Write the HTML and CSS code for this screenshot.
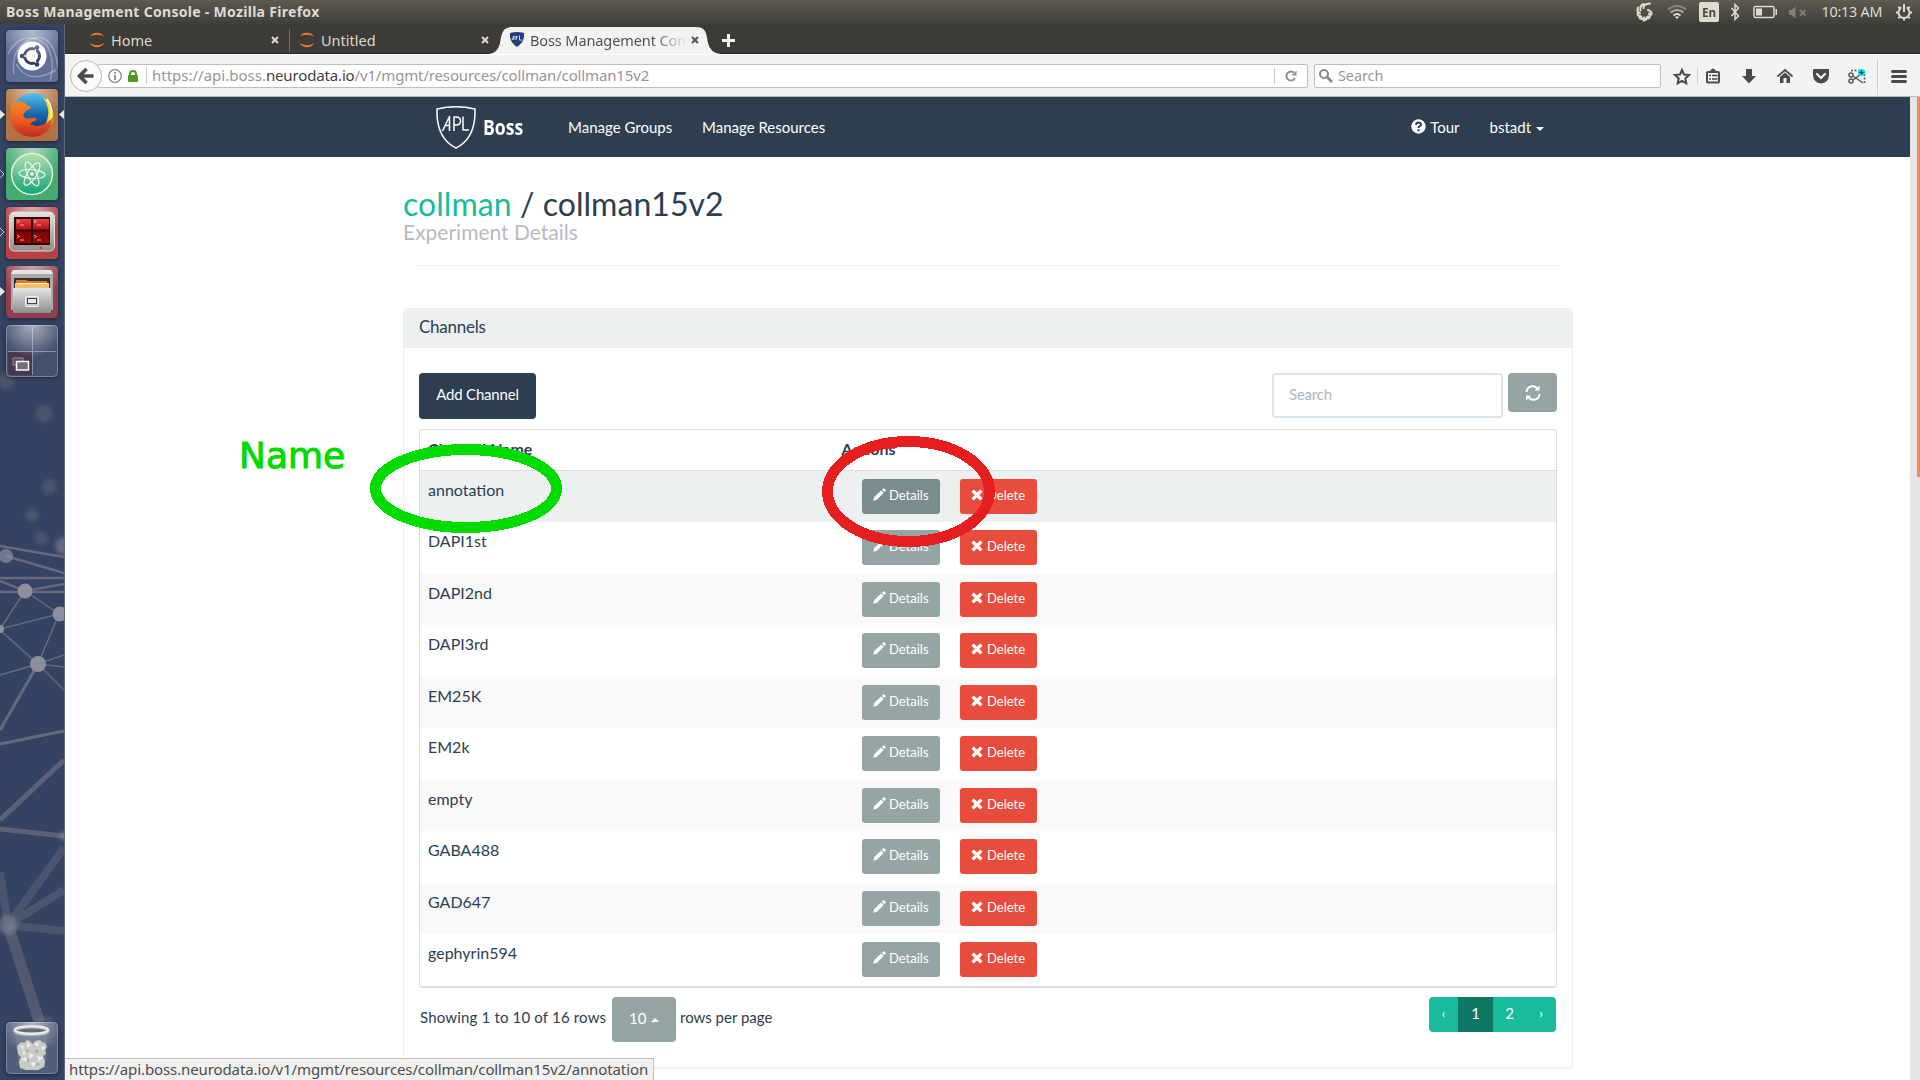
FILE: index.html
```html
<!DOCTYPE html>
<html lang="en">
<head>
<meta charset="utf-8">
<title>Boss Management Console</title>
<link rel="stylesheet" href="styles.css">
</head>
<body>
<svg width="0" height="0" class="defs">
  <defs>
    <symbol id="pencil" viewBox="0 0 14 14"><path fill="currentColor" d="M0.3 13.7 1.4 9.8 8.8 2.6 11.5 5.3 4.2 12.6zM9.6 1.8 11 .5Q11.6 0 12.2.5L13.6 1.9Q14 2.5 13.5 3.1L12.2 4.4z"/></symbol>
    <symbol id="cross" viewBox="0 0 12 12"><path fill="currentColor" d="M.5 2.7 2.7.5 6 3.6 9.3.5 11.5 2.7 8.4 6 11.5 9.3 9.3 11.5 6 8.4 2.7 11.5.5 9.3 3.6 6z"/></symbol>
    <symbol id="jupyter" viewBox="0 0 16 16"><path fill="#f37726" d="M.6 5.2C2 2.2 4.7.8 8 .8s6 1.4 7.4 4.4C13.600 3.500 11 2.800 8 2.800S2.400 3.500.6 5.200zM.6 10.800C2 13.800 4.700 15.200 8 15.200s6-1.400 7.400-4.400C13.600 12.500 11 13.200 8 13.200S2.400 12.500.6 10.800z"/></symbol>
    <radialGradient id="glow" cx=".5" cy="0" r=".62"><stop offset="0" stop-color="#fff" stop-opacity=".55"/><stop offset="1" stop-color="#fff" stop-opacity="0"/></radialGradient>
    <linearGradient id="steel" x1="0" y1="0" x2="0" y2="1"><stop offset="0" stop-color="#e4e4e2"/><stop offset="1" stop-color="#8d8d89"/></linearGradient>
    <linearGradient id="blue" x1="0" y1="0" x2="0" y2="1"><stop offset="0" stop-color="#51c4ef"/><stop offset=".5" stop-color="#1767ac"/><stop offset="1" stop-color="#182a66"/></linearGradient>
    <linearGradient id="fox" x1="0" y1="0" x2="0" y2="1"><stop offset="0" stop-color="#f4942c"/><stop offset=".6" stop-color="#ea5b20"/><stop offset="1" stop-color="#bd2a1c"/></linearGradient>
    <linearGradient id="atom" x1="0" y1="0" x2="0" y2="1"><stop offset="0" stop-color="#b5e0ae"/><stop offset="1" stop-color="#12a575"/></linearGradient>
    <linearGradient id="red" x1="0" y1="0" x2="0" y2="1"><stop offset="0" stop-color="#e04444"/><stop offset=".45" stop-color="#b80d10"/><stop offset=".5" stop-color="#7b0204"/><stop offset="1" stop-color="#960608"/></linearGradient>
  </defs>
</svg>

<header class="panel">
  <span class="panel-title">Boss Management Console - Mozilla Firefox</span>
  <svg class="tray" width="292" height="24" viewBox="1628 0 292 24">
    <g fill="none" stroke="#dfdbd2" stroke-width="2" stroke-linecap="round">
      <path d="M1643.500 8Q1643 4 1650 3.500M1640.500 10.500Q1639.500 6 1643.500 4M1640 13.500Q1636.500 11.500 1638 7.500M1641.500 16.500Q1637.500 16.500 1637.500 13M1644.500 17.500Q1641.500 20 1639.500 18M1647.500 16.500Q1647 20 1643.500 20.500M1649 13.500Q1651 16.500 1648.500 18.500M1648 10Q1652 11.500 1651.500 14.500"/>
    </g>
    <g fill="none" stroke-width="2"><path stroke="#87857e" d="M1668 9.500q9-7 18 0"/><path stroke="#b1aea6" d="M1670.500 12.500q6.500-5 13 0"/><path stroke="#dfdbd2" d="M1673.500 15.500q3.500-3 7 0"/></g><path fill="#dfdbd2" d="m1675 17 2 2 2-2q-2-1.500-4 0"/>
    <rect x="1699" y="2" width="20" height="20" rx="2" fill="#dfdbd2"/><text x="1702" y="17" class="lang" textLength="14" lengthAdjust="spacingAndGlyphs">En</text>
    <path d="m1731.500 8 7 8-3.500 3.500V4.500l3.500 3.500-7 8" fill="none" stroke="#dfdbd2" stroke-width="1.500"/>
    <rect x="1754" y="6.500" width="20" height="11" rx="1.500" fill="none" stroke="#dfdbd2" stroke-width="1.500"/><path fill="#dfdbd2" d="M1756 8.500h6v7h-6zM1775.500 9h1.500v6h-1.500z"/>
    <path fill="#83807a" d="M1789 10h2.500l4-3.500v12l-4-3.500h-2.500z"/><path stroke="#83807a" stroke-width="1.800" d="m1800 10 5.500 5.500m0-5.500-5.500 5.500"/>
    <text x="1821.500" y="17" class="clock" textLength="61">10:13 AM</text>
    <g fill="none" stroke="#dfdbd2"><circle cx="1904" cy="12.500" r="5.500" stroke-width="2"/><path stroke-width="2" d="M1904 18v2.500M1896 12.500h2.500M1909.500 12.500h2.500M1898.300 6.800l1.500 1.500M1909.700 6.800l-1.500 1.500M1898.300 18.200l1.500-1.500M1909.700 18.200l-1.500-1.500"/><path stroke="#504e48" stroke-width="5" d="M1904 4.500v6"/><path stroke-width="2" d="M1904 4v8"/></g>
  </svg>
</header>

<div class="desktop">
  <aside class="launcher">
    <svg class="wallpaper" width="64" height="1056" viewBox="0 24 64 1056">
      <g class="haze" fill="#8b8794" opacity=".25"><circle cx="44" cy="414" r="9"/><circle cx="49" cy="487" r="8"/><circle cx="32" cy="515" r="7"/><circle cx="41" cy="538" r="7"/><circle cx="6" cy="381" r="9"/></g>
      <g stroke="#a59aa0" fill="none" opacity=".45">
        <g stroke-width="2.500"><path d="M6 556 64 573M0 578H64M0 592H64M0 581 25 591 64 584M0 546 64 557"/></g>
        <g stroke-width="1.500"><path d="M25 591 59 614 0 629 25 591M59 614 38 664 0 630M38 664 64 655M38 664 64 667M38 664 64 690M38 664 0 675"/></g>
        <g stroke-width="3"><path d="M38 664 0 730M0 744 64 731"/></g>
        <g stroke-width="5" opacity=".8"><path d="M0 820 64 760M0 829 64 836"/></g>
        <g stroke-width="8" opacity=".45"><path d="M8 925 64 848M8 925 64 890M8 925 64 931M8 925 0 872"/></g>
        <path stroke-width="11" opacity=".6" d="m8 925 34 105"/>
      </g>
      <g fill="#8d8f9f"><circle cx="6" cy="556" r="7" opacity=".7"/><circle cx="25" cy="591" r="7.500"/><circle cx="60" cy="614" r="7.500"/><circle cx="0" cy="629" r="4"/><circle cx="38" cy="664" r="8"/><g class="haze"><circle cx="8" cy="925" r="10" opacity=".5"/><circle cx="64" cy="546" r="9" opacity=".5"/><circle cx="64" cy="836" r="5" opacity=".5"/><circle cx="44" cy="1028" r="12" opacity=".3"/></g></g>
    </svg>
    <div class="dock">
      <svg class="app" viewBox="0 0 52 52"><rect width="52" height="52" rx="4" fill="#5f6f98"/><g fill="none" stroke="#fff" stroke-opacity=".3" stroke-width="1.500"><path d="M2 24Q16-2 40 14 50 30 44 51"/><path d="M8 44Q4 16 28 8 48 4 52 38"/><path d="M50 40Q22 56 10 34"/></g><circle cx="26" cy="26" r="14.500" fill="#fff"/><circle cx="26" cy="26" r="7.500" fill="none" stroke="#343f60" stroke-width="3"/><path d="M26 26 12 26M26 26 33 14M26 26 33 38" stroke="#fff" stroke-width="1.500"/><circle cx="26" cy="26" r="5.500" fill="#fff"/><g fill="#343f60"><circle cx="16" cy="26" r="2.300"/><circle cx="31" cy="17.500" r="2.300"/><circle cx="31" cy="34.500" r="2.300"/></g><rect width="52" height="52" rx="4" fill="url(#glow)"/></svg>
      <svg class="app" viewBox="0 0 52 52"><rect width="52" height="52" rx="4" fill="#b27344"/><rect width="52" height="52" rx="4" fill="url(#glow)"/><circle cx="27" cy="25" r="21" fill="url(#blue)"/><path d="M36 7Q50 16 47 32 44 42 34 44L40 34Q46 20 36 7z" fill="#fbd22e"/><path d="M41 10Q48 20 44 34" fill="none" stroke="#fff3a0" stroke-width="2"/><path fill="url(#fox)" d="M9 8Q7 11 9 14 13 11 18 13L22 17Q25 16 25 19L20 22 17 26Q19 31 25 29 30 28 31 31 27 32 24 35 33 40 43 32L47 28Q45 47 26 48 5 46 4 27 4 18 8 13z"/></svg>
      <svg class="app" viewBox="0 0 52 52"><rect width="52" height="52" rx="4" fill="#45ac70"/><rect width="52" height="52" rx="4" fill="url(#glow)"/><circle cx="26" cy="26" r="20.500" fill="url(#atom)" stroke="#e2f0e4" stroke-width="1.500"/><g fill="none" stroke="#eaf7ec" stroke-width="1.200"><ellipse cx="26" cy="26" rx="13" ry="4.500" transform="rotate(5 26 26)"/><ellipse cx="26" cy="26" rx="13" ry="4.500" transform="rotate(65 26 26)"/><ellipse cx="26" cy="26" rx="13" ry="4.500" transform="rotate(122 26 26)"/></g><circle cx="26" cy="26" r="1.800" fill="#fff"/></svg>
      <svg class="app" viewBox="0 0 52 52"><rect width="52" height="52" rx="4" fill="#b74245"/><rect width="52" height="52" rx="4" fill="url(#glow)"/><rect x="3.500" y="5" width="45" height="39" rx="5" fill="url(#steel)" stroke="#deded9"/><rect x="8" y="10" width="36" height="28" fill="#350306"/><path fill="url(#red)" d="M10 12H43V36H10z"/><path stroke="#35090b" stroke-width="2" d="M26 10v28M8 23.500h36"/><g stroke="#ffc4c4" fill="none" opacity=".8"><path d="m11 13 2.500 1.500L11 16M14 18h4M28 13l2.500 1.500L28 16M31 18h4M11 28l2.500 1.500L11 31M14 33h4M28 28l2.500 1.500L28 31M31 33h4"/></g><circle cx="35" cy="41" r="1.300" fill="#ee2d2d"/></svg>
      <svg class="app" viewBox="0 0 52 52"><rect width="52" height="52" rx="4" fill="#923e4c"/><rect width="52" height="52" rx="4" fill="url(#glow)"/><path fill="#aaa" d="M5 8 7 4H45L47 8V44H5z"/><path fill="#e6e6e4" d="M5 8 7 4H45L47 8z"/><path fill="#333" d="M8 12h36v12H8z"/><path fill="#e07820" d="M10 14h10l2 1h19v8H10z"/><path fill="#f8bd68" d="M9 17h34v5H9z"/><path stroke="#fff2d8" d="M11 17.500h31"/><path fill="url(#steel)" d="M7 22H45V47H7z"/><rect x="19.500" y="30.500" width="13" height="10" rx="1.500" fill="#ccc" stroke="#eee"/><rect x="21.500" y="32.500" width="9" height="5" fill="#eee" stroke="#444"/></svg>
      <svg class="app" viewBox="0 0 52 52"><rect x=".5" y=".5" width="51" height="51" rx="4" fill="#43516f" stroke="#7a859c"/><rect x="2" y="27" width="24" height="23" fill="#46384a"/><path stroke="#8791a5" d="M26.500 2v48M2 26.500h48"/><rect width="52" height="52" rx="4" fill="url(#glow)"/><rect x="7" y="33" width="10" height="7" fill="#54485a" stroke="#938b98"/><rect x="10.500" y="36.500" width="12" height="8.500" fill="#76697b" stroke="#fff" stroke-width="1.500"/></svg>
      <svg class="app trash" viewBox="0 0 52 52"><rect x=".5" y=".5" width="51" height="51" rx="4" fill="#505d7d" stroke="#7b869f"/><rect width="52" height="52" rx="4" fill="url(#glow)"/><path fill="#7a8496" opacity=".6" d="M9 12H42L39 45Q26 49 13 45z"/><path fill="#c9cbc7" d="m11 24 4-4 3 1 3-3 3 1 3 3 2-3 5-1 2 2 3 1 2 4-2 3 1 4-3 2 2 5-1 6-6 3H20l-6-2-1-7 2-4-3-3z"/><path fill="#eff0ec" d="m14 23 4 1-1 4zM21 20l4 3-4 3zM28 22l5-2-1 5zM36 24l3 1-3 4zM15 37l5-2 1 5zM23 31l5 2-4 4zM31 34l6 1-4 5zM24 41l6-1-2 5zM17 29l3 2-3 2z"/><path fill="#a9aca7" d="m20 27 4 2-4 2zM29 27l4 2-3 3zM21 36l3 2-3 3zM30 41l4 1-4 2z"/><ellipse cx="25.500" cy="8.500" rx="16.500" ry="3.800" fill="#626c7c" stroke="#b9bbb6" stroke-width="3.500"/><ellipse cx="25.500" cy="8" rx="16.500" ry="3.800" fill="none" stroke="#eeefeb" stroke-width="2"/></svg>
    </div>
    <svg class="pips" width="64" height="300" viewBox="0 24 64 300"><path fill="#e8e6e3" d="m0 110 5 4.500-5 4.500zM64 110l-5 4.500 5 4.500zM0 287l5 4.500-5 4.500z"/><path fill="none" stroke="#c4cad4" d="m0 170 4 4-4 4M0 228l4 4-4 4"/></svg>
  </aside>

  <main class="window">
    <nav class="tabs">
      <div class="tab home"><svg width="16" height="16"><use href="#jupyter"/></svg><span>Home</span><svg class="close" width="8" height="8"><use href="#cross"/></svg></div>
      <div class="tab untitled"><svg width="16" height="16"><use href="#jupyter"/></svg><span>Untitled</span><svg class="close" width="8" height="8"><use href="#cross"/></svg></div>
      <div class="tab active">
        <svg class="tab-shape" width="236" height="28" viewBox="0 0 236 28"><path fill="#f4f3f1" d="M0 28Q9 27 11 17C13 4 15 1 24 1H205C216 1 217 4 219 17Q221 27 232 28z"/></svg>
        <svg class="favicon" width="14" height="15" viewBox="0 0 14 15"><path fill="#253e7a" d="M0 1Q7-1 14 1 15 10 7 15-1 10 0 1z"/><path fill="none" stroke="#fff" stroke-width=".8" d="m2 8 2-4v4M6 8V4q3 1 0 2.500M9.500 3.500V8h2.500"/></svg>
        <span class="active-name">Boss Management Con</span><svg class="close" width="8" height="8"><use href="#cross"/></svg>
      </div>
      <svg class="plus" width="13" height="13"><path stroke="#f4f3f1" stroke-width="3" d="M6.500 0v13M0 6.500h13"/></svg>
    </nav>

    <div class="toolbar">
      <svg class="back" width="32" height="32"><circle cx="16" cy="16" r="15.500" fill="#fafaf9" stroke="#b7b5b1"/><path fill="none" stroke="#4a4a4a" stroke-width="3.600" d="M23.500 16H11M16.500 9 9.500 16l7 7"/></svg>
      <div class="address">
        <svg width="14" height="14"><circle cx="7" cy="7" r="6.300" fill="none" stroke="#888" stroke-width="1.300"/><path stroke="#777" stroke-width="1.600" d="M7 3v1.700M7 6v5"/></svg>
        <svg class="lock" width="10" height="12"><path fill="#4e9a22" d="M0 6q0-1 1-1V4q0-4 4-4t4 4v1q1 0 1 1v5q0 1-1 1H1q-1 0-1-1z"/><path fill="#fff" d="M3 5V4q0-2 2-2t2 2v1z"/></svg>
        <span class="url"><span class="scheme">https://api.boss.</span><span class="domain">neurodata.io</span><span class="path">/v1/mgmt/resources/collman/collman15v2</span></span>
        <span class="reload"><svg width="12" height="12"><path fill="none" stroke="#8795a1" stroke-width="2" d="M9 2.800A4.500 4.500 0 1 0 10 8"/><path fill="#8795a1" d="M6.500 5.500H11.500V.5z"/></svg></span>
      </div>
      <div class="search"><svg width="14" height="14"><circle cx="5" cy="5" r="4" fill="none" stroke="#888" stroke-width="2"/><path stroke="#888" stroke-width="2.600" d="m8 8 5 5"/></svg><span>Search</span></div>
      <svg class="tools" width="259" height="42" viewBox="1661 54 259 42">
        <path fill="none" stroke="#4a4a4a" stroke-width="2" d="m1682 69 2 4.500 5 .6-3.700 3.300 1 4.900-4.300-2.500-4.300 2.500 1-4.900-3.700-3.300 5-.6z"/>
        <path stroke="#d2d0cd" d="M1697.500 67v16M1877.500 58v36"/>
        <rect x="1707" y="71" width="12" height="10.500" rx="1" fill="none" stroke="#4a4a4a" stroke-width="2"/><path stroke="#4a4a4a" stroke-width="1.500" d="M1709 74.500h2M1712 74.500h5.500M1709 78h2M1712 78h5.500"/><path fill="#4a4a4a" d="M1709 71q0-1.500 2-1.500 0-2 2-2t2 2q2 0 2 1.500z"/>
        <path fill="#4a4a4a" d="M1746 68h6v7h4l-7 7.500-7-7.500h4z"/>
        <path fill="none" stroke="#4a4a4a" stroke-width="1.800" d="m1777.500 75.500 7.500-6.500 7.500 6.500"/><path fill="#4a4a4a" d="m1780 76 5-4.500 5 4.500v6h-3.500v-5h-3v5h-3.500z"/>
        <path fill="#4a4a4a" d="M1813 69q0-1 1-1h14q1 0 1 1v5q-.5 8-8 8.500-7.500-.5-8-8.500z"/><path fill="none" stroke="#f4f3f1" stroke-width="2.200" stroke-linecap="round" d="m1817 73 4 4 4-4"/>
        <g fill="none" stroke="#555" stroke-width="1.500"><path stroke-dasharray="2 1.500" d="M1851 69.500h12M1864.500 73v9"/><circle cx="1851" cy="74" r="2"/><circle cx="1851" cy="80" r="2"/><path d="m1853 79 8-6M1853 75l10 7"/></g><circle cx="1861.500" cy="71.500" r="3.800" fill="#14e6f2"/><path stroke="#234" stroke-width="1.300" d="M1859.500 71.500h4M1861.500 69.500v4"/>
        <path stroke="#4a4a4a" stroke-width="3" stroke-linecap="round" d="M1892.500 70.500h13M1892.500 75.500h13M1892.500 80.500h13"/>
      </svg>
    </div>

    <div class="viewport">
      <div class="page">
        <div class="navbar">
          <svg class="shield" width="40" height="43" viewBox="0 0 40 43"><g fill="none" stroke="#fff" stroke-width="1.500" stroke-linejoin="round"><path d="M1 3Q20-1.500 39 3 40 32 20 42 0 32 1 3z"/><path d="M6.500 25 13.500 10.500V25M9 19.500h4.500M18 25V11h2q4.500 0 4.500 4t-4.500 4h-2M27 10.500V24h6"/></g></svg>
          <span class="brand">Boss</span>
          <a class="groups">Manage Groups</a><a>Manage Resources</a>
          <a class="tour"><svg width="15" height="15"><circle cx="7.500" cy="7.500" r="7.200" fill="#fff"/><path fill="none" stroke="#2c3e50" stroke-width="2" d="M5 5.800q.2-2.300 2.500-2.300T10 5.500q0 1.200-1.500 1.900-1 .5-1 1.600M7.500 10.300v2"/></svg>Tour</a>
          <a>bstadt<i class="caret"></i></a>
        </div>
        <div class="container">
          <h1><span class="collection">collman</span> / collman15v2</h1>
          <p class="sub">Experiment Details</p>
          <hr>
          <section class="card">
            <h2>Channels</h2>
            <div class="card-body">
              <div class="actions">
                <div class="add">Add Channel</div>
                <div class="filter">Search</div>
                <div class="refresh"><svg width="16" height="16"><path fill="none" stroke="#fff" stroke-width="2" d="M1.500 7A6 6 0 0 1 12.500 4M14.500 9A6 6 0 0 1 3.500 12"/><path fill="#fff" d="M9.500 5.500h5V.5zM1 15.500v-5h5z"/></svg></div>
              </div>
              <div class="table">
                <div class="thead"><span>Channel Name</span><span class="ah">Actions</span></div>
                <div class="row hover"><span>annotation</span><div class="btn details"><svg width="13" height="13"><use href="#pencil"/></svg>Details</div><div class="btn delete"><svg width="12" height="12"><use href="#cross"/></svg>Delete</div></div>
                <div class="row"><span>DAPI1st</span><div class="btn details"><svg width="13" height="13"><use href="#pencil"/></svg>Details</div><div class="btn delete"><svg width="12" height="12"><use href="#cross"/></svg>Delete</div></div>
                <div class="row"><span>DAPI2nd</span><div class="btn details"><svg width="13" height="13"><use href="#pencil"/></svg>Details</div><div class="btn delete"><svg width="12" height="12"><use href="#cross"/></svg>Delete</div></div>
                <div class="row"><span>DAPI3rd</span><div class="btn details"><svg width="13" height="13"><use href="#pencil"/></svg>Details</div><div class="btn delete"><svg width="12" height="12"><use href="#cross"/></svg>Delete</div></div>
                <div class="row"><span>EM25K</span><div class="btn details"><svg width="13" height="13"><use href="#pencil"/></svg>Details</div><div class="btn delete"><svg width="12" height="12"><use href="#cross"/></svg>Delete</div></div>
                <div class="row"><span>EM2k</span><div class="btn details"><svg width="13" height="13"><use href="#pencil"/></svg>Details</div><div class="btn delete"><svg width="12" height="12"><use href="#cross"/></svg>Delete</div></div>
                <div class="row"><span>empty</span><div class="btn details"><svg width="13" height="13"><use href="#pencil"/></svg>Details</div><div class="btn delete"><svg width="12" height="12"><use href="#cross"/></svg>Delete</div></div>
                <div class="row"><span>GABA488</span><div class="btn details"><svg width="13" height="13"><use href="#pencil"/></svg>Details</div><div class="btn delete"><svg width="12" height="12"><use href="#cross"/></svg>Delete</div></div>
                <div class="row"><span>GAD647</span><div class="btn details"><svg width="13" height="13"><use href="#pencil"/></svg>Details</div><div class="btn delete"><svg width="12" height="12"><use href="#cross"/></svg>Delete</div></div>
                <div class="row"><span>gephyrin594</span><div class="btn details"><svg width="13" height="13"><use href="#pencil"/></svg>Details</div><div class="btn delete"><svg width="12" height="12"><use href="#cross"/></svg>Delete</div></div>
              </div>
              <div class="footer">
                <span class="showing">Showing 1 to 10 of 16 rows</span>
                <div class="size">10<i class="caret up"></i></div>
                <span>rows per page</span>
                <div class="pager"><span class="arrow">‹</span><span class="current">1</span><span class="two">2</span><span class="arrow next">›</span></div>
              </div>
            </div>
          </section>
        </div>
      </div>
      <div class="scroll"><div class="thumb"></div></div>
    </div>
  </main>
</div>

<div class="status">https://api.boss.neurodata.io/v1/mgmt/resources/collman/collman15v2/annotation</div>
<div class="note">Name</div>
<svg class="marks" width="1920" height="1080" fill="none" stroke-width="11" shape-rendering="crispEdges"><ellipse cx="466" cy="488.500" rx="90.500" ry="39" stroke="#00db00"/><ellipse cx="908.500" cy="491.500" rx="81" ry="50" stroke="#e51f1f"/></svg>
</body>
</html>
```
FILE: styles.css
```css
* { box-sizing: border-box; }
body { margin: 0; width: 1920px; height: 1080px; overflow: hidden; background: #fff; font-family: Lato, sans-serif; color: #2c3e50; }
svg { display: block; flex: none; }
.defs { position: absolute; }

.panel { height: 24px; display: flex; align-items: center; justify-content: space-between; padding-left: 6px; background: linear-gradient(#5f5c50, #57554d 15%, #3f3e39); }
.panel-title { font: bold 14px/20px "Noto Sans", sans-serif; letter-spacing: .3px; color: #dfdbd2; margin-top: -1px; }
.lang { font: bold 13px "Noto Sans", sans-serif; fill: #4a4843; }
.clock { font: 14.300px "Noto Sans", sans-serif; fill: #dfdbd2; }

.desktop { display: flex; height: 1056px; }
.launcher { position: relative; width: 65px; background: #344361; border-right: 1px solid #5d6984; }
.wallpaper, .pips { position: absolute; left: 0; top: 0; }
.wallpaper { filter: blur(.6px); }
.haze { filter: blur(2px); }
.dock { position: relative; height: 1056px; display: flex; flex-direction: column; gap: 7px; padding: 6px 0 6px 6px; }
.app { width: 52px; height: 52px; filter: drop-shadow(0 1px 2px rgba(0, 0, 0, .45)); }
.trash { margin-top: auto; }

.window { width: 1855px; display: flex; flex-direction: column; }
.tabs { height: 30px; display: flex; background: #3c3b37; border-bottom: 1px solid #282724; font: 14.5px/20px "Noto Sans", sans-serif; color: #dcd8d0; }
.tab { display: flex; align-items: center; height: 29px; padding-top: 3px; }
.tab .close { margin-left: auto; }
.home { width: 225px; padding-left: 24px; padding-right: 10px; gap: 6px; border-right: 1px solid #6d6b66; height: 23px; margin-top: 5px; padding-top: 0; padding-bottom: 2px; }
.untitled { width: 199px; padding: 2px 0 0 9px; gap: 6px; }
.active { position: relative; width: 211px; height: 30px; color: #4c4c4c; padding-left: 22px; padding-top: 1px; }
.tab-shape { position: absolute; left: 0; top: 2px; }
.favicon { position: relative; left: -1px; }
.active-name { position: relative; width: 156px; margin-left: 5px; white-space: nowrap; letter-spacing: -.1px; background: linear-gradient(90deg, #4c4c4c 78%, rgba(76, 76, 76, .05)); background-clip: text; color: transparent; }
.active .close { position: relative; color: #555; margin-left: 5px; }
.plus { margin: 10px 0 0 22px; }

.toolbar { height: 43px; background: #f4f3f1; border-bottom: 1px solid #bdbbb7; border-top: 1px solid #fff; display: flex; align-items: center; padding-left: 5px; font: 15px/20px "Noto Sans", sans-serif; }
.back { position: relative; z-index: 1; }
.address { margin-left: -5px; width: 1211px; height: 24px; border: 1px solid #bfbdb9; border-radius: 2px; background: #fff; display: flex; align-items: center; padding-left: 10px; }
.lock { margin-left: 6px; }
.url { margin-left: 8px; border-left: 1px solid #c9c9c9; padding-left: 5px; height: 17px; line-height: 16px; white-space: nowrap; color: #969696; }
.domain { color: #3f3f3f; letter-spacing: -.15px; }
.path { letter-spacing: -.15px; }
.reload { margin-left: auto; width: 33px; height: 16px; border-left: 1px solid #c9c9c9; padding: 2px 0 0 10px; }
.search { margin-left: 6px; width: 347px; height: 24px; border: 1px solid #bfbdb9; border-radius: 2px; background: #fff; display: flex; align-items: center; gap: 5px; padding-left: 4px; font-size: 14.300px; color: #969696; }

.viewport { display: flex; height: 983px; }
.page { width: 1845px; background: #fff; }
.scroll { width: 10px; background: #e5e5e5; display: flex; justify-content: flex-end; }
.thumb { width: 3px; height: 380px; background: #f08763; }

.navbar { height: 60px; background: #2c3e50; color: #fff; font-size: 15px; display: flex; align-items: center; padding: 0 0 1px 371px; }
.shield { margin-top: 1px; }
.brand { width: 40px; margin-left: 7px; font: bold 21px/24px "Open Sans", sans-serif; transform: scaleX(.84); transform-origin: 0 0; }
.groups { margin-left: 45px; margin-right: 30px; width: 104px; white-space: nowrap; }
.tour { display: flex; align-items: center; gap: 4px; margin-left: 586px; margin-right: 30px; }
.caret { display: inline-block; border: 4px solid transparent; border-top-color: currentColor; border-bottom: 0; margin-left: 5px; vertical-align: 2px; }
.caret.up { border-bottom: 4px solid currentColor; border-top: 0; }

.container { width: 1170px; margin-left: 338px; }
h1 { margin: 29px 0 0; font: 32px/36px Lato, sans-serif; letter-spacing: .05px; }
.collection { color: #18bc9c; }
.sub { margin: 0; font-size: 21px; line-height: 20px; color: #b4bcc2; }
hr { margin: 23px 15px 42px; border: 0; border-top: 1px solid #ecf0f1; }
.card { height: 760px; border: 1px solid #ecf0f1; border-radius: 4px; box-shadow: 0 1px 1px rgba(0, 0, 0, .05); }
h2 { margin: 0; height: 39px; padding-left: 15px; background: #ecf0f1; font: 17px/36px Lato, sans-serif; letter-spacing: -.25px; }
.card-body { padding: 25px 15px 0; }
.actions { height: 56px; display: flex; align-items: flex-start; font-size: 15px; }
.add { width: 117px; height: 46px; border-radius: 4px; background: #2c3e50; color: #fff; text-align: center; line-height: 43px; letter-spacing: -.2px; }
.filter { margin-left: auto; width: 231px; height: 45px; border: 2px solid #dce4ec; border-radius: 4px; padding-left: 15px; color: #acb6c0; line-height: 38px; letter-spacing: -.2px; }
.refresh { margin-left: 5px; width: 49px; height: 39px; border-radius: 4px; background: #95a5a6; padding: 12px 0 0 17px; }
.table { height: 559px; border: 1px solid #ddd; border-bottom-width: 2px; border-radius: 4px; font-size: 16px; }
.thead { height: 40.5px; border-bottom: 1px solid #ddd; padding-left: 8px; font-weight: bold; line-height: 38px; display: flex; }
.ah { margin-left: 309px; }
.row { height: 51.5px; display: flex; padding-left: 8px; }
.row:nth-child(even) { background: #f9f9f9; }
.row.hover { background: #ecf0f1; }
.row > span { width: 434px; line-height: 37px; }
.btn { height: 35px; margin-top: 8px; border-radius: 3px; color: #fff; font-size: 13px; line-height: 32px; display: flex; padding-left: 11px; }
.btn svg { margin-top: 9px; }
.details { width: 78px; background: #95a5a6; gap: 3px; }
.hover .details { background: #798d8f; border: 1px solid #74898a; padding-left: 10px; line-height: 30px; }
.hover .details svg { margin-top: 8px; }
.delete { width: 77px; margin-left: 20px; background: #e74c3c; padding-left: 11px; gap: 4px; }
.delete svg { margin-top: 10px; }
.footer { display: flex; font-size: 15px; padding: 9px 1px 0; line-height: 40px; }
.showing { width: 192px; letter-spacing: .17px; white-space: nowrap; }
.size { width: 64px; height: 45px; margin-right: 4px; border-radius: 4px; background: #95a5a6; color: #fff; padding-left: 17px; line-height: 42px; }
.pager { margin-left: auto; height: 35px; display: flex; border-radius: 4px; overflow: hidden; background: #18bc9c; color: #fff; line-height: 33px; text-align: center; }
.pager .current { width: 35px; background: #0f7864; }
.pager .two { width: 33px; }
.pager .arrow { width: 29px; font-size: 13px; }
.pager .next { width: 30px; }

.status { position: absolute; left: 65px; top: 1058px; width: 589px; height: 22px; padding-left: 4px; border: 1px solid #c1bfbc; border-left: 0; border-bottom: 0; background: #f2f1f0; color: #4c4c4c; font: 15px/20px "Noto Sans", sans-serif; letter-spacing: -.11px; white-space: nowrap; }
.note { position: absolute; left: 239px; top: 435px; font: 36px/42px "DejaVu Sans", sans-serif; color: #00db00; -webkit-text-stroke: 1px #00db00; }
.marks { position: absolute; left: 0; top: 0; }
```
